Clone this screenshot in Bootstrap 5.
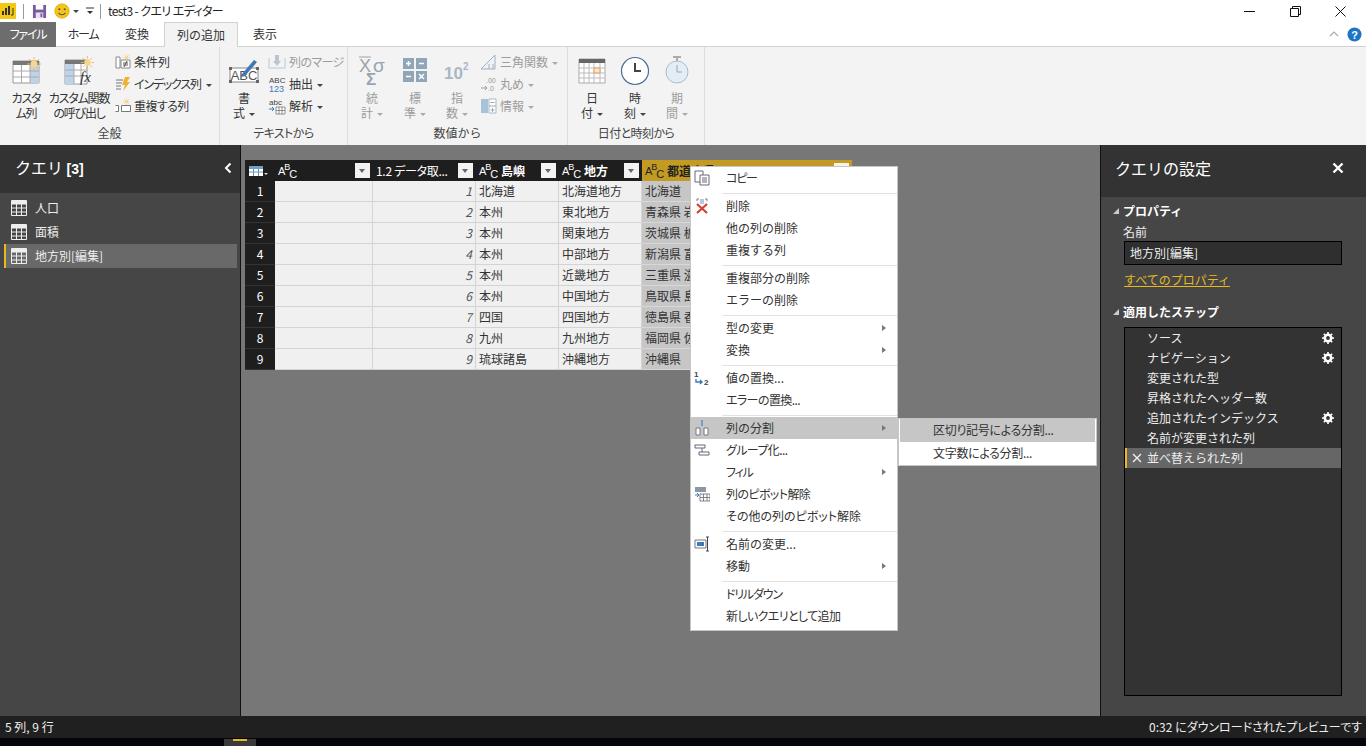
<!doctype html>
<html lang="ja">
  <head>
    <meta charset="UTF-8" />
    <title>test3 - クエリ エディター</title>
    <link href="https://cdn.jsdelivr.net/npm/bootstrap@5.3.0/dist/css/bootstrap.min.css" rel="stylesheet" />
    <style>
      html, body { height: 100%; }
      body {
        width: 1366px; height: 746px; overflow: hidden; background: #fff;
        font-family: "Noto Sans CJK JP", "Liberation Sans", sans-serif;
        font-size: 12px; line-height: 16px; color: #333;
      }
      svg { display: block; flex: none; }
      .palt { font-feature-settings: "palt"; }
      .tiny-tight { font-feature-settings: "palt"; letter-spacing: -.3px; }
      .tight { font-feature-settings: "palt"; letter-spacing: -.6px; }
      .tighter { font-feature-settings: "palt"; letter-spacing: -1.2px; }
      /* title bar */
      .title-bar { height: 22px; }
      .title-sep { width: 1px; height: 15px; background: #9a9a9a; }
      .title-text { color: #222; font-size: 12px; margin-left: 7px; }
      .win-btn { width: 45.5px; }
      .win-group { margin-right: 2.5px; }
      /* tabs */
      .tab-bar { height: 25px; border-bottom: 1px solid #d2d2d2; }
      .tab-item { height: 25px; line-height: 23px; text-align: center; color: #333; }
      .tab-file { width: 56px; background: #6d6d6d; color: #fff; }
      .tab-home { width: 54px; }
      .tab-conv { width: 54px; }
      .tab-add { width: 74px; background: #f3f3f3; border: 1px solid #d2d2d2; border-bottom: 0; height: 25px; margin-bottom: -1px; position: relative; }
      .tab-view { width: 54px; }
      /* ribbon */
      .ribbon { height: 98px; background: #f3f3f3; }
      .rb-group { height: 98px; border-right: 1px solid #dcdcdc; }
      .rb-g1 { width: 220px; } .rb-g2 { width: 128px; } .rb-g3 { width: 220px; } .rb-g4 { width: 137px; }
      .rb-body { height: 77px; }
      .rb-pad6 { padding-left: 6px; } .rb-pad2 { padding-left: 2px; }
      .rb-title { text-align: center; color: #444; line-height: 18px; }
      .rb-big { text-align: center; padding-top: 6px; color: #333; flex: none; }
      .rb-ico { height: 37px; padding-bottom: 2px; display: flex; align-items: center; justify-content: center; }
      .bw36 { width: 36px; } .bw40 { width: 40px; } .bw42 { width: 42px; } .bw44 { width: 44px; } .bw66 { width: 66px; }
      .rb-label { line-height: 15px; white-space: nowrap; }
      .rb-small { padding-top: 4px; flex: none; }
      .rb-row { height: 22px; gap: 3px; white-space: nowrap; }
      .gap-l2 { margin-left: 2px; } .gap-l3 { margin-left: 3px; } .gap-l6 { margin-left: 6px; }
      .dim { color: #9c9c9c; }
      .rb-caret {
        display: inline-block; width: 0; height: 0; margin-left: 4px; vertical-align: middle; letter-spacing: 0;
        border-left: 3px solid transparent; border-right: 3px solid transparent; border-top: 3px solid #444;
      }
      .dim .rb-caret { border-top-color: #aaa; }
      /* main area */
      .main-area { height: 571px; }
      .side-left { width: 241px; background: #464646; border-right: 1px solid #111; color: #eee; }
      .side-right { width: 266px; background: #464646; border-left: 1px solid #111; color: #eee; }
      .side-head-l { height: 48px; background: #333; color: #fff; font-size: 16px; padding: 0 8px 2px 15px; }
      .side-head-r { height: 52px; background: #333; color: #fff; font-size: 16px; padding: 0 22px 6px 14px; }
      .side-head-l b { font-family: "Liberation Sans", sans-serif; font-size: 14px; }
      .query-list { padding: 3px 3px 0 4px; }
      .query-item { height: 24px; gap: 8px; padding-left: 7px; }
      .query-item.sel { background: #696969; box-shadow: inset 2px 0 0 #e8b923; }
      .center-pane { background: #777; padding: 15px 0 0 4px; position: relative; }
      /* grid */
      .data-grid { table-layout: fixed; width: 607px; border-collapse: separate; border-spacing: 0; }
      .col-w30 { width: 30px; } .col-w98 { width: 98px; } .col-w103 { width: 103px; } .col-w83 { width: 83px; } .col-w210 { width: 210px; }
      .data-grid th { height: 21px; background: #1e1e1e; color: #fff; padding: 0 3px; font-weight: 700; white-space: nowrap; overflow: hidden; }
      .data-grid th.col-sel { background: #c39a22; color: #222; }
      .data-grid th.th-plain { font-weight: 400; }
      .data-grid td { height: 21px; padding: 0 3px 1px; background: #f0f0f0; border-right: 1px solid #d4d4d4; border-bottom: 1px solid #d4d4d4; color: #333; white-space: nowrap; overflow: hidden; line-height: 18px; }
      .data-grid td.row-num { background: #1e1e1e; color: #fff; text-align: center; border: 0; border-bottom: 1px solid #333; }
      .data-grid td.num { text-align: right; font-style: italic; color: #555; }
      .data-grid td.col-sel { background: #c6c6c6; border-right: 0; border-bottom-color: #d8d8d8; }
      .th-inner { gap: 3px; height: 21px; }
      .type-ic { display: flex; width: 19px; flex: none; font-family: "Liberation Sans", sans-serif; font-weight: 400; line-height: 12px; color: #fff; }
      .col-sel .type-ic { color: #222; }
      .type-ic span { font-size: 11px; }
      .type-ic .up { font-size: 9px; margin-left: -1px; transform: translateY(-4px); }
      .type-ic .dn { font-size: 11px; margin-left: -1px; transform: translateY(3px); }
      .filter-btn { width: 15px; height: 15px; background: #f2f2f2; flex: none; margin-left: auto; position: relative; }
      .filter-btn::after {
        content: ""; position: absolute; left: 4px; top: 6px; width: 0; height: 0;
        border-left: 3.5px solid transparent; border-right: 3.5px solid transparent; border-top: 4px solid #666;
      }
      /* context menu */
      .ctx-menu {
        position: absolute; display: block; left: 449px; top: 21px; width: 208px; height: 465px; min-width: 0;
        padding: 0; margin: 0; background: #fff; border: 1px solid #c6c6c6; border-radius: 0; font-size: 12px;
      }
      .ctx-menu .dropdown-item { height: 22px; padding: 0 0 0 3px; display: flex; align-items: center; color: #333; line-height: 22px; position: relative; }
      .ctx-menu .dropdown-item.hot { background: #c6c6c6; }
      .ctx-ico { width: 32px; flex: none; }
      .ctx-arrow {
        position: absolute; right: 11px; top: 8px; width: 0; height: 0;
        border-top: 3.5px solid transparent; border-bottom: 3.5px solid transparent; border-left: 4px solid #777;
      }
      .ctx-menu .dropdown-divider { margin: 4px 0 1px 31px; border-top: 1px solid #e2e2e2; opacity: 1; }
      .ctx-menu.ctx-sub { left: 657px; top: 273px; width: 199px; height: 48px; padding: 0 1px; }
      .ctx-sub .dropdown-item { padding: 0 0 1px 33px !important; height: 23px !important; }
      /* settings */
      .set-body { padding: 5px 24px 0 12px; }
      .set-head { font-weight: 700; color: #fff; gap: 4px; height: 18px; }
      .set-head-2 { margin-top: 14px; }
      .set-tri { width: 0; height: 0; border-left: 6px solid transparent; border-bottom: 6px solid #ccc; }
      .set-name { margin: 4px 0 1px 10px; }
      .name-box { margin-left: 11px; height: 24px; background: #2f2f2f; border: 1px solid #000; padding-left: 5px; line-height: 22px; color: #eee; }
      .prop-link { display: block; margin: 6px 0 0 11px; color: #e8b923; line-height: 18px; text-decoration: underline; }
      .step-box { margin: 6px 0 0 11px; height: 369px; background: #333; border: 1px solid #000; }
      .step-item { height: 20px; padding: 0 7px 0 22px; color: #eee; position: relative; }
      .step-item.sel { background: #666; box-shadow: inset 2px 0 0 #e8b923; }
      .step-x { position: absolute; left: 7px; top: 5px; }
      /* status */
      .status-bar { height: 22px; background: #202020; color: #eee; padding: 0 4px 0 5px; }
      .task-bar { height: 8px; background: #05060c; }
      .task-hot { width: 32px; height: 8px; margin-left: 224px; background: #3a3a3a; padding: 0 9px; }
      .task-hot i { display: block; height: 2px; margin-top: 1px; background: #e2b923; }
      .ms-7 { margin-left: 7px; } .ms-6px { margin-left: 6px; } .ms-3px { margin-left: 3px; }
    </style>
  </head>
  <body class="d-flex flex-column">
    <svg width="0" height="0" class="position-absolute">
      <symbol id="i-table" viewBox="0 0 16 16">
        <path d="M.5 .5h15v15H.5z" fill="none" stroke="#eee"/>
        <path d="M.5 1h15v3.5H.5z" fill="#eee"/>
        <path d="M.5 8h15M.5 12h15M5.5 4v12M10.500 4v12" stroke="#eee" fill="none"/>
      </symbol>
      <symbol id="i-gear" viewBox="0 0 12 12">
        <circle cx="6" cy="6" r="3.2" fill="none" stroke="#fff" stroke-width="2.6"/>
        <path d="M6 0v12M0 6h12M1.800 1.800l8.400 8.400M10.200 1.800l-8.400 8.400" stroke="#fff" stroke-width="1.600" stroke-dasharray="2 8"/>
      </symbol>
      <symbol id="i-sun" viewBox="0 0 14 14">
        <circle cx="7" cy="7" r="3.500" fill="#f7d58c"/>
        <path d="M7 0v14M0 7h14M2 2l10 10M12 2L2 12" stroke="#f0b860" stroke-dasharray="2.500 9"/>
      </symbol>
    </svg>

    <header class="title-bar d-flex align-items-center">
      <svg width="16" height="16" viewBox="0 0 16 16"><rect width="16" height="16" fill="#f2c811"/><path d="M3 12V8M6 12V5M9 12V3" stroke="#333" stroke-width="2"/><path d="M11 12h2V5" fill="none" stroke="#333"/></svg>
      <div class="title-sep ms-7"></div>
      <svg width="15" height="15" viewBox="0 0 16 16" class="ms-2"><path d="M1 1h14v14H1z" fill="#7a5a9e"/><path d="M4 1h8v5H4z" fill="#fff"/><path d="M4 9h8v6H4z" fill="#e8e0f0"/><path d="M9 10h2v4H9z" fill="#7a5a9e"/></svg>
      <svg width="16" height="16" viewBox="0 0 18 18" class="ms-7"><circle cx="9" cy="9" r="8" fill="#f5c518" stroke="#e0a800"/><circle cx="6" cy="7" r="1.200" fill="#555"/><circle cx="12" cy="7" r="1.200" fill="#555"/><path d="M5 11c2 3 6 3 8 0" fill="none" stroke="#555" stroke-width="1.200"/></svg>
      <span class="rb-caret ms-3px"></span>
      <svg width="8" height="8" viewBox="0 0 8 8" class="ms-7"><path d="M0 1h8" stroke="#333"/><path d="M1 4h6L4 7z" fill="#333"/></svg>
      <div class="title-sep ms-6px"></div>
      <span class="title-text tight">test3 - クエリ エディター</span>
      <div class="ms-auto d-flex align-items-center win-group">
        <div class="win-btn d-flex justify-content-center"><svg width="11" height="11" viewBox="0 0 11 11"><path d="M0 5.500h11" stroke="#111"/></svg></div>
        <div class="win-btn d-flex justify-content-center"><svg width="11" height="11" viewBox="0 0 11 11"><path d="M.5 2.500h8v8h-8zM2.500 2.500v-2h8v8h-2" fill="none" stroke="#111"/></svg></div>
        <div class="win-btn d-flex justify-content-center"><svg width="11" height="11" viewBox="0 0 11 11"><path d="M.5 .5l10 10M10.500 .5l-10 10" stroke="#111"/></svg></div>
      </div>
    </header>

    <nav class="tab-bar d-flex">
      <div class="tab-item tab-file tighter">ファイル</div>
      <div class="tab-item tab-home tighter">ホーム</div>
      <div class="tab-item tab-conv">変換</div>
      <div class="tab-item tab-add">列の追加</div>
      <div class="tab-item tab-view">表示</div>
      <div class="ms-auto d-flex align-items-center gap-2 pe-1">
        <svg width="10" height="6" viewBox="0 0 10 6"><path d="M1 5l4-4 4 4" fill="none" stroke="#aaa" stroke-width="1.200"/></svg>
        <svg width="15" height="15" viewBox="0 0 15 15"><circle cx="7.500" cy="7.500" r="7" fill="#1b75c4"/><text x="7.500" y="11.500" text-anchor="middle" font-size="11" font-weight="700" fill="#fff" font-family="Liberation Sans">?</text></svg>
      </div>
    </nav>

    <section class="ribbon d-flex">
      <div class="rb-group rb-g1">
        <div class="rb-body d-flex rb-pad6">
          <div class="rb-big bw40">
            <div class="rb-ico"><svg width="30" height="28" viewBox="0 0 30 28"><path d="M2 4h26v22H2z" fill="#fff" stroke="#999"/><path d="M2 4h26v4H2z" fill="#777"/><path d="M19 8h9v18h-9z" fill="#bcd3e8"/><path d="M2 14h26M2 20h26M10.500 8v18M19 8v18" stroke="#aaa" fill="none"/><use href="#i-sun" x="16" y="0" width="14" height="14"/></svg></div>
            <div class="rb-label tighter">カスタ<br />ム列</div>
          </div>
          <div class="rb-big bw66">
            <div class="rb-ico"><svg width="32" height="30" viewBox="0 0 32 30"><path d="M2 4h22v24H2z" fill="#fff" stroke="#999"/><path d="M2 4h22v4H2z" fill="#777"/><path d="M2 8h9v20H2z" fill="#bcd3e8"/><path d="M2 14h22M2 20h22M11 8v20M18 8v20" stroke="#aaa" fill="none"/><use href="#i-sun" x="18" y="0" width="13" height="13"/><text x="17" y="26" font-family="Liberation Serif" font-style="italic" font-size="15" fill="#333">fx</text></svg></div>
            <div class="rb-label tighter">カスタム関数<br />の呼び出し</div>
          </div>
          <div class="rb-small gap-l3">
            <div class="rb-row d-flex align-items-center">
              <svg width="16" height="16" viewBox="0 0 16 16"><path d="M1 3h4v11H1zM6 6h9v8H6z" fill="#fff" stroke="#888"/><path d="M8 9h5M8 11h5M9 13l3-6" stroke="#555" fill="none"/><use href="#i-sun" x="8" y="0" width="7" height="7"/></svg>
              <span>条件列</span>
            </div>
            <div class="rb-row d-flex align-items-center">
              <svg width="16" height="16" viewBox="0 0 16 16"><path d="M1 4h7M1 7h6M1 10h5M1 13h5" stroke="#777"/><path d="M10 1h5l-3 5h3l-7 9 2-6H7z" fill="#f0b030"/></svg>
              <span><span class="tighter">インデックス</span>列<span class="rb-caret"></span></span>
            </div>
            <div class="rb-row d-flex align-items-center">
              <svg width="16" height="16" viewBox="0 0 16 16"><path d="M.5 7.500h3v6h-3M6.500 7.500h9v6h-9z" fill="#fff" stroke="#777"/><use href="#i-sun" x="8" y="0" width="7" height="7"/></svg>
              <span class="tight">重複する列</span>
            </div>
          </div>
        </div>
        <div class="rb-title">全般</div>
      </div>

      <div class="rb-group rb-g2">
        <div class="rb-body d-flex rb-pad6">
          <div class="rb-big bw36">
            <div class="rb-ico"><svg width="32" height="30" viewBox="0 0 32 30"><path d="M2 12h28v14H2z" fill="#fff" stroke="#888"/><path d="M1 11h3v3H1zM28 11h3v3h-3zM1 24h3v3H1zM28 24h3v3h-3z" fill="#666"/><text x="16" y="24" text-anchor="middle" font-size="13" fill="#555" font-family="Liberation Sans">ABC</text><path d="M14 18L26 4l3 2-12 14-4 1z" fill="#3f78b5"/></svg></div>
            <div class="rb-label">書<br />式<span class="rb-caret"></span></div>
          </div>
          <div class="rb-small gap-l6">
            <div class="rb-row d-flex align-items-center dim">
              <svg width="18" height="16" viewBox="0 0 18 16"><path d="M1 4v10h16V4" fill="none" stroke="#b5c8dc"/><path d="M7 1h4v6h2l-4 5-4-5h2z" fill="#b9c6d2"/></svg>
              <span class="tight">列のマージ</span>
            </div>
            <div class="rb-row d-flex align-items-center">
              <svg width="18" height="18" viewBox="0 0 18 18"><text x="1" y="8" font-size="8" fill="#444" font-family="Liberation Sans">ABC</text><text x="1" y="17" font-size="9" fill="#3f78b5" font-family="Liberation Sans">123</text></svg>
              <span>抽出<span class="rb-caret"></span></span>
            </div>
            <div class="rb-row d-flex align-items-center">
              <svg width="18" height="18" viewBox="0 0 18 18"><text x="1" y="8" font-size="8" fill="#444" font-family="Liberation Sans">abc</text><path d="M1 12h5l-2-2M6 12l-2 2" fill="none" stroke="#3f78b5"/><path d="M8 10h9v7H8zM8 13.500h9M11 10v7M14 10v7" fill="#fff" stroke="#777" stroke-width=".8"/></svg>
              <span>解析<span class="rb-caret"></span></span>
            </div>
          </div>
        </div>
        <div class="rb-title tight">テキストから</div>
      </div>

      <div class="rb-group rb-g3">
        <div class="rb-body d-flex rb-pad2">
          <div class="rb-big bw44 dim">
            <div class="rb-ico"><svg width="30" height="36" viewBox="0 0 30 36"><text x="2" y="19" font-size="18" fill="#9aa4ad" font-family="Liberation Sans">X</text><path d="M2 4h12" stroke="#9aa4ad"/><text x="16" y="19" font-size="19" fill="#9aa4ad" font-family="Liberation Sans">σ</text><text x="9" y="32" font-size="17" font-weight="700" fill="#9aa4ad" font-family="Liberation Sans">Σ</text></svg></div>
            <div class="rb-label">統<br />計<span class="rb-caret"></span></div>
          </div>
          <div class="rb-big bw42 dim">
            <div class="rb-ico"><svg width="28" height="30" viewBox="0 0 28 30"><path d="M2 2h11v11H2zM15 2h11v11H15zM2 15h11v11H2zM15 15h11v11H15z" fill="#8fa5b8"/><path d="M5 7.500h5M7.500 5v5M18 7.500h5M5 20.500h5M18 18l5 5M23 18l-5 5" stroke="#fff" stroke-width="1.500"/></svg></div>
            <div class="rb-label">標<br />準<span class="rb-caret"></span></div>
          </div>
          <div class="rb-big bw42 dim">
            <div class="rb-ico"><svg width="28" height="30" viewBox="0 0 28 30"><text x="1" y="23" font-size="17" font-weight="700" fill="#a9b7c4" font-family="Liberation Sans">10</text><text x="20" y="14" font-size="10" font-weight="700" fill="#a9b7c4" font-family="Liberation Sans">2</text></svg></div>
            <div class="rb-label">指<br />数<span class="rb-caret"></span></div>
          </div>
          <div class="rb-small gap-l2">
            <div class="rb-row d-flex align-items-center dim">
              <svg width="17" height="16" viewBox="0 0 17 16"><path d="M1 15L15 1v14z" fill="#eef2f5" stroke="#9fb0bf"/><path d="M9 15v-5M13 15v-5" stroke="#9fb0bf"/></svg>
              <span>三角関数<span class="rb-caret"></span></span>
            </div>
            <div class="rb-row d-flex align-items-center dim">
              <svg width="17" height="16" viewBox="0 0 17 16"><text x="6" y="7" font-size="7" fill="#999" font-family="Liberation Sans">.00</text><path d="M1 12h6M5 10l2 2-2 2" fill="none" stroke="#999"/><text x="8" y="15" font-size="7" fill="#999" font-family="Liberation Sans">.0</text></svg>
              <span>丸め<span class="rb-caret"></span></span>
            </div>
            <div class="rb-row d-flex align-items-center dim">
              <svg width="17" height="16" viewBox="0 0 17 16"><path d="M1 1h7v14H1z" fill="#a9c2da"/><path d="M9 1h7v14H9z" fill="#fff" stroke="#a9b7c4"/><path d="M9 8h7M12.500 10v4M10.500 12h4M10.500 4.500h4" stroke="#9aa9b6"/></svg>
              <span>情報<span class="rb-caret"></span></span>
            </div>
          </div>
        </div>
        <div class="rb-title">数値から</div>
      </div>

      <div class="rb-group rb-g4">
        <div class="rb-body d-flex rb-pad2">
          <div class="rb-big bw44">
            <div class="rb-ico"><svg width="28" height="28" viewBox="0 0 28 28"><path d="M1 2h26v24H1z" fill="#fff" stroke="#aaa"/><path d="M1 2h26v4H1z" fill="#666"/><path d="M1 11h26M1 16h26M1 21h26M6 6v20M11 6v20M16 6v20M22 6v20" stroke="#bbb"/><path d="M16 11h6v5h-6z" fill="#fbe6c8" stroke="#e0a060"/></svg></div>
            <div class="rb-label">日<br />付<span class="rb-caret"></span></div>
          </div>
          <div class="rb-big bw42">
            <div class="rb-ico"><svg width="30" height="30" viewBox="0 0 30 30"><circle cx="15" cy="15" r="13.500" fill="#fff" stroke="#4a6d93" stroke-width="1.200"/><path d="M15 7v8h6" fill="none" stroke="#444" stroke-width="2"/></svg></div>
            <div class="rb-label">時<br />刻<span class="rb-caret"></span></div>
          </div>
          <div class="rb-big bw42 dim">
            <div class="rb-ico"><svg width="26" height="30" viewBox="0 0 26 30"><path d="M9 1h8M13 1v4" stroke="#aaa" stroke-width="2"/><circle cx="13" cy="16" r="11" fill="#e2edf6" stroke="#a9bccd"/><path d="M13 9v7h5" fill="none" stroke="#99a5af"/></svg></div>
            <div class="rb-label">期<br />間<span class="rb-caret"></span></div>
          </div>
        </div>
        <div class="rb-title tight">日付と時刻から</div>
      </div>
    </section>

    <main class="main-area d-flex">
      <aside class="side-left flex-none">
        <div class="side-head-l d-flex align-items-center justify-content-between">
          <div>クエリ <b>[3]</b></div>
          <svg width="8" height="12" viewBox="0 0 8 12"><path d="M6.500 1.500L2 6l4.500 4.500" fill="none" stroke="#fff" stroke-width="2"/></svg>
        </div>
        <div class="query-list">
          <div class="query-item d-flex align-items-center"><svg width="16" height="16"><use href="#i-table"/></svg><span>人口</span></div>
          <div class="query-item d-flex align-items-center"><svg width="16" height="16"><use href="#i-table"/></svg><span>面積</span></div>
          <div class="query-item sel d-flex align-items-center"><svg width="16" height="16"><use href="#i-table"/></svg><span>地方別[編集]</span></div>
        </div>
      </aside>

      <section class="center-pane flex-grow-1">
        <table class="data-grid">
          <colgroup><col class="col-w30" /><col class="col-w98" /><col class="col-w103" /><col class="col-w83" /><col class="col-w83" /><col class="col-w210" /></colgroup>
          <thead>
            <tr>
              <th>
                <svg width="20" height="12" viewBox="0 0 20 12"><path d="M1 1h14v10H1z" fill="#fff"/><path d="M1 1h14v3H1z" fill="#6fa0d0"/><path d="M1 7h14M5.500 4v7M10.500 4v7" stroke="#6f8fb0"/><path d="M16 8h4l-2 2z" fill="#ddd"/></svg>
              </th>
              <th><div class="th-inner d-flex align-items-center"><span class="type-ic"><span>A</span><span class="up">B</span><span class="dn">C</span></span><span class="filter-btn"></span></div></th>
              <th class="th-plain"><div class="th-inner d-flex align-items-center"><span class="tiny-tight">1.2 データ取...</span><span class="filter-btn"></span></div></th>
              <th><div class="th-inner d-flex align-items-center"><span class="type-ic"><span>A</span><span class="up">B</span><span class="dn">C</span></span><span>島嶼</span><span class="filter-btn"></span></div></th>
              <th><div class="th-inner d-flex align-items-center"><span class="type-ic"><span>A</span><span class="up">B</span><span class="dn">C</span></span><span>地方</span><span class="filter-btn"></span></div></th>
              <th class="col-sel"><div class="th-inner d-flex align-items-center"><span class="type-ic"><span>A</span><span class="up">B</span><span class="dn">C</span></span><span>都道府県</span><span class="filter-btn"></span></div></th>
            </tr>
          </thead>
          <tbody>
            <tr><td class="row-num">1</td><td></td><td class="num">1</td><td>北海道</td><td>北海道地方</td><td class="col-sel">北海道</td></tr>
            <tr><td class="row-num">2</td><td></td><td class="num">2</td><td>本州</td><td>東北地方</td><td class="col-sel">青森県 岩手県 宮城県 秋田県</td></tr>
            <tr><td class="row-num">3</td><td></td><td class="num">3</td><td>本州</td><td>関東地方</td><td class="col-sel">茨城県 栃木県 群馬県 埼玉県</td></tr>
            <tr><td class="row-num">4</td><td></td><td class="num">4</td><td>本州</td><td>中部地方</td><td class="col-sel">新潟県 富山県 石川県 福井県</td></tr>
            <tr><td class="row-num">5</td><td></td><td class="num">5</td><td>本州</td><td>近畿地方</td><td class="col-sel">三重県 滋賀県 京都府 大阪府</td></tr>
            <tr><td class="row-num">6</td><td></td><td class="num">6</td><td>本州</td><td>中国地方</td><td class="col-sel">鳥取県 島根県 岡山県 広島県</td></tr>
            <tr><td class="row-num">7</td><td></td><td class="num">7</td><td>四国</td><td>四国地方</td><td class="col-sel">徳島県 香川県 愛媛県 高知県</td></tr>
            <tr><td class="row-num">8</td><td></td><td class="num">8</td><td>九州</td><td>九州地方</td><td class="col-sel">福岡県 佐賀県 長崎県 熊本県</td></tr>
            <tr><td class="row-num">9</td><td></td><td class="num">9</td><td>琉球諸島</td><td>沖縄地方</td><td class="col-sel">沖縄県</td></tr>
          </tbody>
        </table>

        <div class="dropdown-menu ctx-menu">
          <div class="dropdown-item"><span class="ctx-ico"><svg width="16" height="16" viewBox="0 0 16 16"><path d="M1 1h8v11H1z" fill="#fff" stroke="#667"/><path d="M6 5h9v10H6z" fill="#fff" stroke="#667"/><path d="M8 8h5M8 10h5M8 12h5" stroke="#667"/></svg></span><span class="tighter">コピー</span></div>
          <hr class="dropdown-divider" />
          <div class="dropdown-item"><span class="ctx-ico"><svg width="16" height="16" viewBox="0 0 16 16"><path d="M3 3V1h2M11 1h2v2" fill="none" stroke="#778"/><path d="M6 1h4v5H6z" fill="#b8c8dc"/><path d="M3 6l10 9M13 6L3 15" stroke="#d0402a" stroke-width="2.200"/></svg></span>削除</div>
          <div class="dropdown-item"><span class="ctx-ico"></span>他の列の削除</div>
          <div class="dropdown-item"><span class="ctx-ico"></span>重複する列</div>
          <hr class="dropdown-divider" />
          <div class="dropdown-item"><span class="ctx-ico"></span>重複部分の削除</div>
          <div class="dropdown-item"><span class="ctx-ico"></span>エラーの削除</div>
          <hr class="dropdown-divider" />
          <div class="dropdown-item"><span class="ctx-ico"></span>型の変更<i class="ctx-arrow"></i></div>
          <div class="dropdown-item"><span class="ctx-ico"></span>変換<i class="ctx-arrow"></i></div>
          <hr class="dropdown-divider" />
          <div class="dropdown-item"><span class="ctx-ico"><svg width="16" height="18" viewBox="0 0 16 18"><text x="0" y="8" font-size="8" font-weight="700" fill="#345" font-family="Liberation Sans">1</text><text x="10" y="16" font-size="8" font-weight="700" fill="#345" font-family="Liberation Sans">2</text><path d="M2 10v3h6M6 11l2 2-2 2" fill="none" stroke="#3f78b5" stroke-width="1.400"/></svg></span>値の置換...</div>
          <div class="dropdown-item"><span class="ctx-ico"></span><span class="tight">エラーの置換...</span></div>
          <hr class="dropdown-divider" />
          <div class="dropdown-item hot"><span class="ctx-ico"><svg width="16" height="16" viewBox="0 0 16 16"><path d="M8 0v6" stroke="#7a9cc0" stroke-width="2"/><path d="M2 8h4v7H2zM10 8h4v7h-4z" fill="#fff" stroke="#778"/></svg></span>列の分割<i class="ctx-arrow"></i></div>
          <div class="dropdown-item"><span class="ctx-ico"><svg width="16" height="14" viewBox="0 0 16 14"><path d="M1 2h10v3H1zM5 9h10v3H5z" fill="#fff" stroke="#667"/><path d="M8 5v4" stroke="#667"/></svg></span><span class="tight">グループ化...</span></div>
          <div class="dropdown-item"><span class="ctx-ico"></span><span class="tighter">フィル</span><i class="ctx-arrow"></i></div>
          <div class="dropdown-item"><span class="ctx-ico"><svg width="16" height="16" viewBox="0 0 16 16"><path d="M1 1h11v5H1z" fill="#8a98a6"/><path d="M6 8h10v7H6zM6 11.500h10M9.500 8v7M13 8v7" fill="#fff" stroke="#667" stroke-width=".8"/><path d="M1 9h4M3 7l2 2-2 2" fill="none" stroke="#3f78b5"/></svg></span><span class="tight">列のピボット解除</span></div>
          <div class="dropdown-item"><span class="ctx-ico"></span><span class="palt">その他の列のピボット解除</span></div>
          <hr class="dropdown-divider" />
          <div class="dropdown-item"><span class="ctx-ico"><svg width="16" height="16" viewBox="0 0 16 16"><path d="M1 4h11v8H1z" fill="#fff" stroke="#778"/><path d="M3 6h7v4H3z" fill="#3f78b5"/><path d="M12 1h3M12 15h3M13.500 1v14" stroke="#445"/></svg></span>名前の変更...</div>
          <div class="dropdown-item"><span class="ctx-ico"></span>移動<i class="ctx-arrow"></i></div>
          <hr class="dropdown-divider" />
          <div class="dropdown-item"><span class="ctx-ico"></span><span class="tighter">ドリルダウン</span></div>
          <div class="dropdown-item"><span class="ctx-ico"></span><span class="tight">新しいクエリとして追加</span></div>
        </div>

        <div class="dropdown-menu ctx-menu ctx-sub">
          <div class="dropdown-item hot"><span class="tiny-tight">区切り記号による分割...</span></div>
          <div class="dropdown-item"><span class="tiny-tight">文字数による分割...</span></div>
        </div>
      </section>

      <aside class="side-right flex-none">
        <div class="side-head-r d-flex align-items-center justify-content-between">
          <div>クエリの設定</div>
          <svg width="12" height="12" viewBox="0 0 12 12"><path d="M1.500 1.500l9 9M10.500 1.500l-9 9" stroke="#fff" stroke-width="2.400"/></svg>
        </div>
        <div class="set-body">
          <div class="set-head d-flex align-items-center"><i class="set-tri"></i>プロパティ</div>
          <div class="set-name">名前</div>
          <div class="name-box">地方別[編集]</div>
          <a class="prop-link">すべてのプロパティ</a>
          <div class="set-head set-head-2 d-flex align-items-center"><i class="set-tri"></i>適用したステップ</div>
          <div class="step-box">
            <div class="step-item d-flex align-items-center justify-content-between"><span>ソース</span><svg width="12" height="12"><use href="#i-gear"/></svg></div>
            <div class="step-item d-flex align-items-center justify-content-between"><span>ナビゲーション</span><svg width="12" height="12"><use href="#i-gear"/></svg></div>
            <div class="step-item d-flex align-items-center"><span>変更された型</span></div>
            <div class="step-item d-flex align-items-center"><span>昇格されたヘッダー数</span></div>
            <div class="step-item d-flex align-items-center justify-content-between"><span>追加されたインデックス</span><svg width="12" height="12"><use href="#i-gear"/></svg></div>
            <div class="step-item d-flex align-items-center"><span>名前が変更された列</span></div>
            <div class="step-item sel d-flex align-items-center"><svg class="step-x" width="10" height="10" viewBox="0 0 10 10"><path d="M1 1l8 8M9 1L1 9" stroke="#eee" stroke-width="1.400"/></svg><span>並べ替えられた列</span></div>
          </div>
        </div>
      </aside>
    </main>

    <footer class="status-bar d-flex align-items-center justify-content-between">
      <span>5 列, 9 行</span>
      <span class="palt">0:32 にダウンロードされたプレビューです</span>
    </footer>
    <div class="task-bar"><div class="task-hot"><i></i></div></div>
  </body>
</html>
